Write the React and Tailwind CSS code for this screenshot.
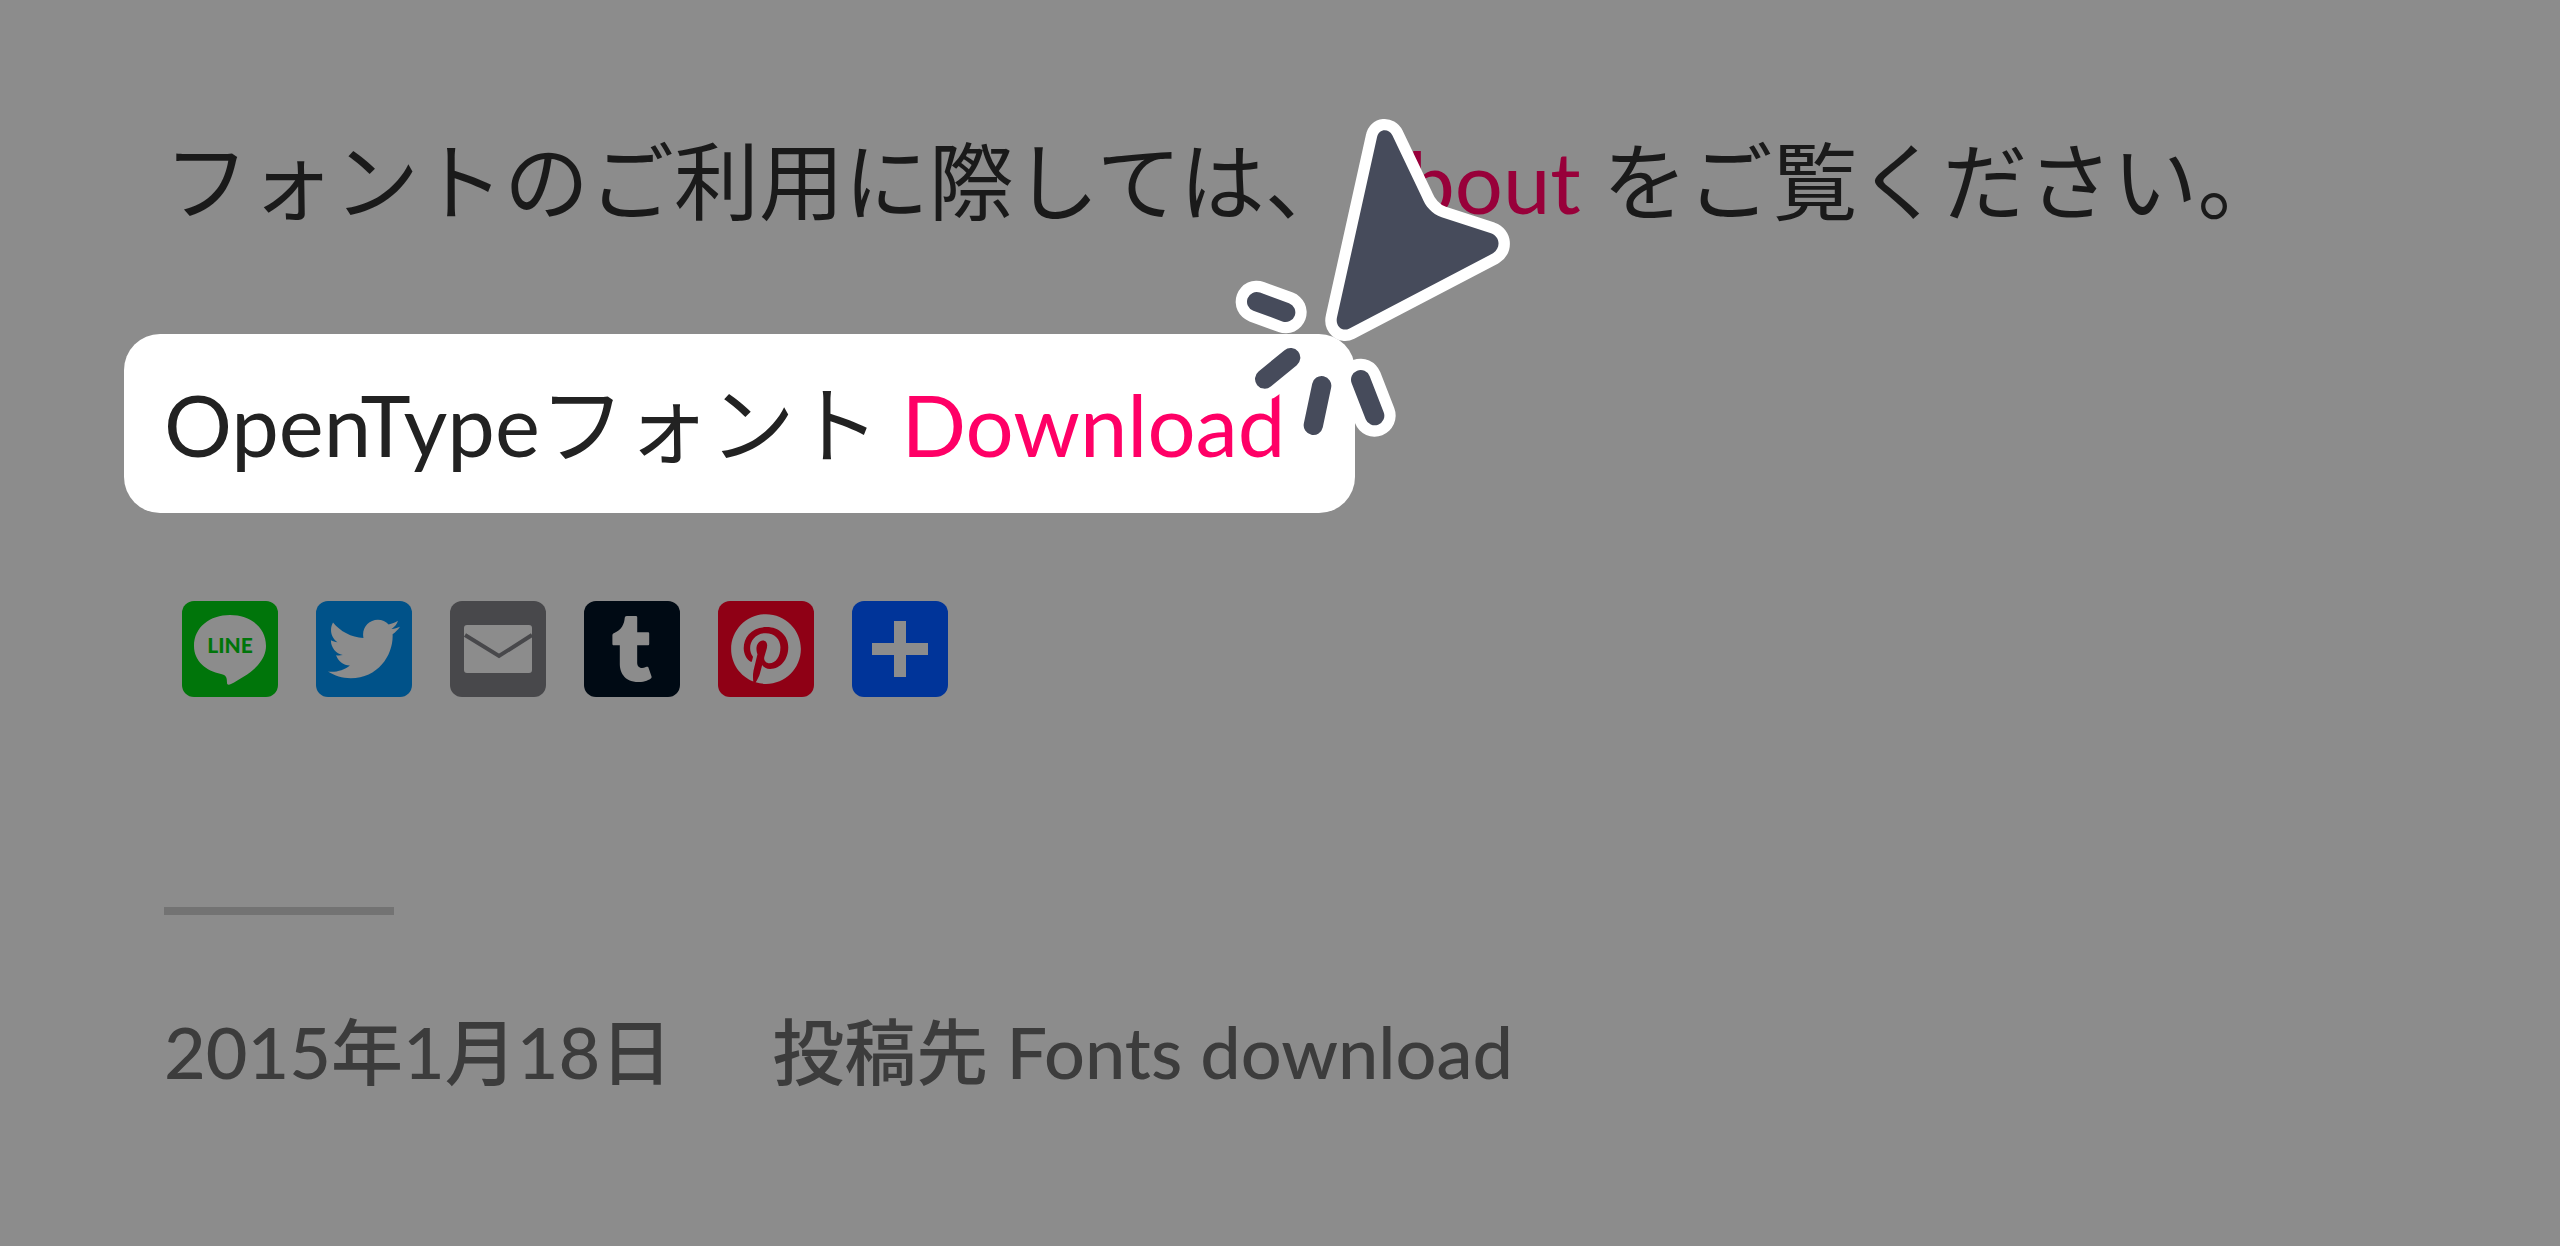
import { FaPinterest, FaTumblr, FaTwitter } from 'react-icons/fa'

function LineIcon() {
  return (
    <svg viewBox="0 0 96 96" className="w-24 h-24" aria-hidden="true">
      <path
        d="M48 14C28 14 12 26 12 45c0 15 12 25 27 28 5 1 6 3 6 9 0 2 2 2 4 1 9-5 20-11 27-19 5-6 8-12 8-19 0-19-16-31-36-31z"
        fill="#8c8c8c"
      />
      <text x="48" y="52" textAnchor="middle" fontSize="21" fontWeight="900" fontFamily="Lato, sans-serif" fill="#00750a">
        LINE
      </text>
    </svg>
  )
}

function MailIcon() {
  return (
    <svg viewBox="0 0 96 96" className="w-24 h-24" aria-hidden="true">
      <rect x="14" y="24" width="68" height="48" rx="3" fill="#8c8c8c" />
      <path d="M15 34l34 21 33-21" fill="none" stroke="#48484b" strokeWidth="4" />
    </svg>
  )
}

function PlusIcon() {
  return (
    <svg viewBox="0 0 96 96" className="w-24 h-24" aria-hidden="true">
      <path d="M42 20h12v22h22v12H54v22H42V54H20V42h22z" fill="#8c8c8c" />
    </svg>
  )
}

const shareLinks = [
  { label: 'Line',      color: 'bg-[#00750a]', icon: <LineIcon /> },
  { label: 'Twitter',   color: 'bg-[#005289]', icon: <FaTwitter size={72} /> },
  { label: 'Email',     color: 'bg-[#48484b]', icon: <MailIcon /> },
  { label: 'Tumblr',    color: 'bg-[#000a14]', icon: <FaTumblr size={66} /> },
  { label: 'Pinterest', color: 'bg-[#8f0015]', icon: <FaPinterest size={72} /> },
  { label: 'Share',     color: 'bg-[#003499]', icon: <PlusIcon /> },
]

// Arrow pointer with the click marks around its tip
function ClickPointer() {
  const marks = 'M173 635L260 667M197 867L275 803M368 887L343 1006M485 869L527 977'
  return (
    <svg
      viewBox="0 0 1080 1110"
      className="absolute -top-[244px] -right-[204px] w-[360px] h-[370px] pointer-events-none"
      fill="none"
      strokeLinecap="round"
      strokeLinejoin="round"
      aria-hidden="true"
    >
      <path d={marks} stroke="#fff" strokeWidth="126" />
      <path d={marks} stroke="#464b5b" strokeWidth="58" />
      <path
        d="M534 142C539 116 569 114 580 136L668 320C680 350 698 370 728 382L876 430C904 440 906 474 882 490L450 716C430 726 408 708 414 682Z"
        fill="#464b5b"
        stroke="#fff"
        strokeWidth="68"
        paintOrder="stroke"
      />
    </svg>
  )
}

export default function App() {
  return (
    <main className="min-h-screen bg-[#8c8c8c] pl-[124px] pt-[121px] font-['Lato','Noto_Sans_CJK_JP',sans-serif] text-[85px] leading-[120px] text-[#1a1a1a]">
      <p className="pl-10 whitespace-nowrap">
        フォントのご利用に際しては、
        <a href="#about" className="text-[#98003a]">About</a> をご覧ください。
      </p>

      <div className="relative mt-[93px] w-fit rounded-[36px] bg-white pl-10 pr-[70px] pt-[30px] pb-[29px] text-[#222] whitespace-nowrap">
        OpenTypeフォント <a href="#download" className="text-[#ff0066]">Download</a>
        <ClickPointer />
      </div>

      <div className="mt-[88px] pl-[58px] flex gap-[38px]">
        {shareLinks.map(({ label, color, icon }) => (
          <a
            key={label}
            href={`#${label.toLowerCase()}`}
            aria-label={label}
            className={`w-24 h-24 rounded-xl flex items-center justify-center text-[#8c8c8c] ${color}`}
          >
            {icon}
          </a>
        ))}
      </div>

      <footer className="pl-10 pt-[210px] text-[72px] text-[#3c3c3c] font-medium whitespace-nowrap">
        <hr className="w-[230px] border-0 h-2 bg-[#737373]" />
        <div className="mt-[76px] flex gap-[100px]">
          <time dateTime="2015-01-18">2015年1月18日</time>
          <span>
            投稿先 <a href="#fonts">Fonts download</a>
          </span>
        </div>
      </footer>
    </main>
  )
}
